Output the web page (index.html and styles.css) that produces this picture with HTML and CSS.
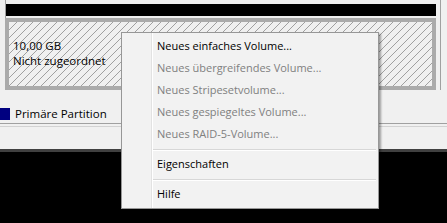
FILE: index.html
```html
<!DOCTYPE html>
<html lang="de">
<head>
<meta charset="utf-8">
<title>Datenträgerverwaltung</title>
<link rel="stylesheet" href="styles.css">
</head>
<body>
<div class="screen">
  <div class="disk">
    <div class="vol">
      <div class="vol-head"></div>
      <div class="vol-body">
        <div class="vol-line">10,00 GB</div>
        <div class="vol-line">Nicht zugeordnet</div>
      </div>
    </div>
  </div>
  <div class="legend">
    <span class="swatch"></span>
    <span class="legend-text">Primäre Partition</span>
  </div>
  <div class="status">
    <div class="status-inner"></div>
  </div>
  <div class="dark-band"></div>
  <div class="black"></div>

  <div class="menu">
    <div class="item">Neues einfaches Volume...</div>
    <div class="item disabled">Neues übergreifendes Volume...</div>
    <div class="item disabled">Neues Stripesetvolume...</div>
    <div class="item disabled">Neues gespiegeltes Volume...</div>
    <div class="item disabled">Neues RAID-5-Volume...</div>
    <div class="sep"></div>
    <div class="item">Eigenschaften</div>
    <div class="sep"></div>
    <div class="item">Hilfe</div>
  </div>
</div>
</body>
</html>
```

FILE: styles.css
```css
html, body {
  margin: 0;
  padding: 0;
  background: #f0f0f0;
}
body {
  font-family: "Open Sans", "Noto Sans", sans-serif;
  font-size: 11px;
  color: #000;
  width: 447px;
  height: 223px;
  overflow: hidden;
}
.screen {
  position: relative;
  width: 447px;
  height: 223px;
  display: flex;
  flex-direction: column;
}
.disk {
  height: 90px;
  padding-left: 5px;
  display: flex;
}
.vol {
  width: 430px;
  border-left: 1px solid #a0a0a0;
  border-right: 1px solid #a0a0a0;
  padding: 4px 4px 0 0;
  display: flex;
  flex-direction: column;
}
.vol-head {
  height: 12px;
  background: #000;
}
.vol-body {
  margin-top: 2px;
  margin-left: -1px;
  flex: 1;
  border: 4px solid #ababab;
  border-left-width: 4px;
  background-color: #f0f0f0;
  background-image: url("data:image/svg+xml,%3Csvg xmlns='http://www.w3.org/2000/svg' width='8' height='8' shape-rendering='crispEdges'%3E%3Cpath fill='%23a0a0a0' d='M7 0h1v1h-1zM6 1h1v1h-1zM5 2h1v1h-1zM4 3h1v1h-1zM3 4h1v1h-1zM2 5h1v1h-1zM1 6h1v1h-1zM0 7h1v1h-1z'/%3E%3C/svg%3E");
  background-size: 8px 8px;
  padding: 16px 0 0 4px;
}
.vol-line {
  font-size: 11.5px;
  line-height: 15px;
  white-space: nowrap;
}
.legend {
  height: 15px;
  padding: 16px 0 2px 0;
  display: flex;
  align-items: center;
  gap: 5px;
}
.swatch {
  width: 10px;
  height: 12px;
  background: #000080;
}
.legend-text {
  font-size: 11.5px;
  line-height: 15px;
}
.status {
  border-top: 1px solid #a0a0a0;
  padding-top: 2px;
}
.status-inner {
  height: 22px;
  border-top: 1px solid #d2d2d2;
}
.dark-band {
  height: 3px;
  background: #404040;
}
.black {
  flex: 1;
  background: #000;
}
.menu {
  position: absolute;
  left: 121px;
  top: 32px;
  width: 256px;
  padding: 2px 0 3px 0;
  background: #f2f2f2;
  border: 1px solid #979797;
  box-shadow: 2px 2px 2px rgba(0, 0, 0, 0.35);
  background-image: linear-gradient(to right, transparent 29px, #e2e2e2 29px, #e2e2e2 30px, #ffffff 30px, #ffffff 31px, transparent 31px);
}
.item {
  height: 22px;
  line-height: 22px;
  padding-left: 35px;
  white-space: nowrap;
}
.item.disabled {
  color: #808080;
}
.sep {
  height: 1px;
  margin: 4px 2px 2px 31px;
  background: #d7d7d7;
  border-bottom: 1px solid #ffffff;
  height: 0;
  border-top: 1px solid #d7d7d7;
  background: none;
}
```
